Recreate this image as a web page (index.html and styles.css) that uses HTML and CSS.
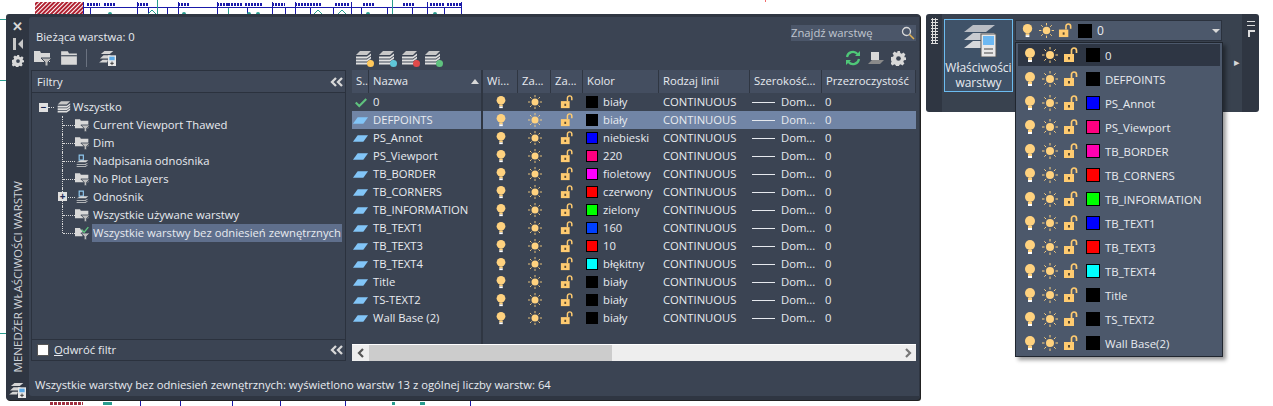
FILE: index.html
```html
<!DOCTYPE html>
<html lang="pl">
<head>
<meta charset="utf-8">
<title>Menedżer właściwości warstw</title>
<link rel="stylesheet" href="styles.css">
</head>
<body>
<svg class="defs" width="0" height="0" aria-hidden="true">
  <defs>
    <pattern id="hatch" width="3" height="3" patternUnits="userSpaceOnUse" patternTransform="rotate(45)"><rect width="3" height="3" fill="#fff"/><rect width="2" height="3" fill="#b02030"/></pattern>
    <symbol id="bulb" viewBox="0 0 16 16"><circle cx="8" cy="6" r="5" fill="#ffd27f"/><rect x="6" y="11" width="4" height="2" fill="#ffd27f"/><rect x="6" y="13" width="4" height="2" fill="#fff"/></symbol>
    <symbol id="sun" viewBox="0 0 16 16"><circle cx="8" cy="8" r="4" fill="#ffd27f"/><path d="M8 0v2.500M8 13.500v2.500M0 8h2.500M13.500 8h2.500M2.300 2.300l1.800 1.800M11.900 11.900l1.800 1.800M2.300 13.700l1.800-1.800M11.900 4.100l1.800-1.800" stroke="#ffd27f" stroke-width="1" fill="none"/></symbol>
    <symbol id="lock" viewBox="0 0 16 16"><rect x="1" y="7" width="10" height="8" fill="#ffcb70"/><rect x="5" y="10" width="2" height="2.500" fill="#5a4a30"/><path d="M8.500 7V3.500a2.500 2.500 0 0 1 5 0V6" fill="none" stroke="#ffcb70" stroke-width="1.700"/></symbol>
    <symbol id="layer" viewBox="0 0 18 10"><polygon points="1,9 6,2 17,2 12,9" fill="#82c5f7"/></symbol>
    <symbol id="check" viewBox="0 0 16 12"><path d="M2 6l4 4 8-8" fill="none" stroke="#5fc27e" stroke-width="2.400"/></symbol>
    <symbol id="stack" viewBox="0 0 18 16"><path d="M6 1h11l-4 4H2z" fill="#c8c8c8"/><path d="M2 6.500h11l4-3v2l-4 3H2zM2 9.500h11l4-3v2l-4 3H2zM2 12.500h11l4-3v2l-4 3H2z" fill="#e0e0e0"/></symbol>
    <symbol id="filterfolder" viewBox="0 0 18 16"><path d="M0 1h6l1 2h9v9H0z" fill="#d8d8d8"/><path d="M7 8h11l-4 4v4h-3v-4z" fill="#bdbdbd" stroke="#3b4453" stroke-width="1"/></symbol>
    <symbol id="folder" viewBox="0 0 16 14"><path d="M1 1h6l1 2h7v10H1z" fill="#d8d8d8"/><path d="M1 5h14" stroke="#3b4453"/></symbol>
    <symbol id="xref" viewBox="0 0 18 16"><path d="M5 1h5v6H5z" fill="none" stroke="#8fc8ef" stroke-width="1.400"/><path d="M7 7h9l-3 2.500H2zM16 10l-3 2.500H2v-1h10zM16 12.500l-3 2.500H2v-1h10z" fill="#d8d8d8"/></symbol>
    <symbol id="filtercheck" viewBox="0 0 18 16"><path d="M0 2h6l1 2h2v8H0z" fill="#d8d8d8"/><path d="M7 8h11l-4 4v4h-3v-4z" fill="#bdbdbd" stroke="#3b4453"/><path d="M8 4l3 3 5-6" fill="none" stroke="#5fc27e" stroke-width="1.700"/></symbol>
    <symbol id="gear" viewBox="0 0 16 16"><path d="M6.500 0h3l.4 2.200 1.500.7 1.900-1.200 2.100 2.100-1.200 1.900.7 1.500L16 6.500v3l-2.200.4-.7 1.500 1.200 1.900-2.100 2.100-1.900-1.200-1.500.7-.4 2.100h-3l-.4-2.100-1.500-.7-1.900 1.200-2.100-2.100 1.200-1.900-.7-1.500L0 9.500v-3l2.200-.4.700-1.500-1.200-1.900 2.100-2.100 1.900 1.200 1.500-.7z" fill="#d8d8d8"/><circle cx="8" cy="8" r="2.500" fill="#3b4453"/></symbol>
    <symbol id="manager" viewBox="0 0 20 18"><path d="M6 1h10l-4 3.500H2zM5 6h8l-2 3.500H1zM4 11h6l-1 3H0z" fill="#d4d4d4"/><rect x="10" y="6" width="9" height="12" fill="#e8e8e8"/><rect x="11.500" y="7.500" width="6" height="4" fill="#5aa9e6"/><path d="M12.500 15h4M14.500 13v4" stroke="#333" stroke-width="1"/></symbol>
    <symbol id="dchev" viewBox="0 0 13 10"><path d="M6 1L2 5l4 4M12 1L8 5l4 4" fill="none" stroke="#d8d8d8" stroke-width="2.300"/></symbol>
  </defs>
</svg>

<div class="stage">
  <svg class="cad" width="1273" height="406" aria-hidden="true">
    <rect x="35" y="2" width="49" height="12" fill="url(#hatch)"/>
    <g stroke="#1a1aa8" fill="none" shape-rendering="crispEdges">
      <path d="M84 7.500H462M83.500 2V14M90.500 7V14M137.500 2V14M148.500 7V14M167.500 7V14M178.500 2V14M217.500 2V14M247.500 7V14M272.500 2V14M285.500 7V14M295.500 2V14M310.500 7V14M333.500 7V14M351.500 2V14M361.500 7V14M387.500 7V14M412.500 7V14M427.500 2V14M444.500 7V14M461.500 2V14"/>
      <path d="M87 4.500h13M104 4.500h11M137 4.500h11M178 4.500h12M217 4.500h11M228 4.500h14M245 4.500h17M272 4.500h13M295 4.500h15M310 4.500h12M335 4.500h15M363 4.500h12M403 4.500h12M430 4.500h14M447 4.500h15" stroke-width="3" stroke-dasharray="2 1"/>
      <path d="M140.500 401v5M180.500 401v5M232.500 401v5M280.500 401v5M345.500 401v5M470.500 401v5"/>
      <path d="M50 403h33" stroke="#a03040" stroke-width="3" stroke-dasharray="3 1"/>
      <path d="M103 403h9M392 403h3M420 403h5" stroke="#2a9d8f" stroke-width="3"/>
    </g>
    <g stroke="#2a9d8f" fill="none" shape-rendering="crispEdges">
      <path d="M0 19.500h6M0 80.500h6M0 333.500h6M157.500 0v14M228.500 8v6M392.500 0v14"/>
      <path d="M152 10l-4 4h8zM318 10l-4 4h8zM342 10l-4 4h8z"/>
    </g>
    <g fill="#2a9d8f"><circle cx="110" cy="14" r="2"/><circle cx="184" cy="14" r="2"/><circle cx="249" cy="14" r="2"/><circle cx="258" cy="14" r="2"/><circle cx="368" cy="14" r="2"/><circle cx="435" cy="14" r="2"/></g>
    <path d="M765.500 0v2" stroke="#f26a6a"/>
  </svg>

  <section class="palette">
    <aside class="rail">
      <div class="rail-top">
        <span class="rail-btn close">✕</span>
        <svg class="rail-pin" viewBox="0 0 10 12"><path d="M0 0h3v12H0zM10 1v10L5 6z" fill="#c8c8c8"/></svg>
        <svg class="rail-gear"><use href="#gear"/></svg>
      </div>
      <div class="rail-bottom">
        <span class="rail-title">MENEDŻER WŁAŚCIWOŚCI WARSTW</span>
        <svg class="rail-icon"><use href="#manager"/></svg>
      </div>
    </aside>

    <div class="main">
      <div class="cols">
        <div class="left">
          <div class="current">Bieżąca warstwa: 0</div>
          <div class="tools">
            <svg class="tool"><use href="#filterfolder"/></svg>
            <svg class="tool"><use href="#folder"/></svg>
            <span class="sep"></span>
            <svg class="tool"><use href="#manager"/></svg>
          </div>
          <div class="filters">
            <div class="filters-head"><span>Filtry</span><svg class="chev"><use href="#dchev"/></svg></div>
            <div class="tree">
              <div class="tree-root"><span class="box">−</span><span class="twig"></span><svg class="tree-ico"><use href="#stack"/></svg><span>Wszystko</span></div>
              <ul class="branch">
                <li><span class="twig"></span><svg class="tree-ico"><use href="#filterfolder"/></svg><span>Current Viewport Thawed</span></li>
                <li><span class="twig"></span><svg class="tree-ico"><use href="#filterfolder"/></svg><span>Dim</span></li>
                <li><span class="twig"></span><svg class="tree-ico"><use href="#xref"/></svg><span>Nadpisania odnośnika</span></li>
                <li><span class="twig"></span><svg class="tree-ico"><use href="#filterfolder"/></svg><span>No Plot Layers</span></li>
                <li><span class="box box-abs">+</span><span class="twig"></span><svg class="tree-ico"><use href="#xref"/></svg><span>Odnośnik</span></li>
                <li><span class="twig"></span><svg class="tree-ico"><use href="#filterfolder"/></svg><span>Wszystkie używane warstwy</span></li>
                <li class="last"><span class="twig"></span><svg class="tree-ico"><use href="#filtercheck"/></svg><span class="tree-sel">Wszystkie warstwy bez odniesień zewnętrznych</span></li>
              </ul>
            </div>
            <div class="filters-foot"><span class="checkbox"></span><span><u>O</u>dwróć filtr</span><svg class="chev"><use href="#dchev"/></svg></div>
          </div>
        </div>

        <div class="right">
          <div class="search-row"><div class="search"><span>Znajdź warstwę</span><svg class="search-ico" viewBox="0 0 14 14"><circle cx="5.500" cy="5.500" r="4" fill="none" stroke="#d8d8d8" stroke-width="1.300"/><path d="M8.500 8.500l4.500 4.500" stroke="#e0b050" stroke-width="1.500"/></svg></div></div>
          <div class="layer-tools">
            <div class="tool-group">
              <span class="stack-tool"><svg class="tool"><use href="#stack"/></svg><i class="dot d-y"></i></span>
              <span class="stack-tool"><svg class="tool"><use href="#stack"/></svg><i class="dot d-c"></i></span>
              <span class="stack-tool"><svg class="tool"><use href="#stack"/></svg><i class="dot d-r"></i></span>
              <span class="stack-tool"><svg class="tool"><use href="#stack"/></svg><i class="dot d-g"></i></span>
            </div>
            <div class="tool-group tool-right">
              <svg class="refresh" viewBox="0 0 16 16"><path d="M2 7a6 6 0 0 1 10.500-3M14 9a6 6 0 0 1-10.500 3" fill="none" stroke="#4fc878" stroke-width="2.200"/><path d="M15 1v5h-5zM1 15v-5h5z" fill="#4fc878"/></svg>
              <svg class="settings-layer" viewBox="0 0 16 14"><rect x="3" y="1" width="8" height="8" fill="#d8d8d8"/><path d="M4 9h12l-4 4H0z" fill="#8a8a8a"/></svg>
              <svg class="gear"><use href="#gear"/></svg>
            </div>
          </div>

          <div class="table">
            <div class="thead">
              <span>S..</span><span class="sort">Nazwa<i class="arrow"></i></span><span>Wi...</span><span>Za...</span><span>Za...</span><span>Kolor</span><span>Rodzaj linii</span><span>Szerokość...</span><span>Przezroczystość</span>
            </div>
            <div class="rows">
              <div class="row"><span class="cs"><svg class="mark-check"><use href="#check"/></svg></span><span class="name">0</span><span class="st"><svg class="ico"><use href="#bulb"/></svg></span><span class="st"><svg class="ico"><use href="#sun"/></svg></span><span class="st"><svg class="ico"><use href="#lock"/></svg></span><span class="col"><i class="sw black"></i>biały</span><span class="lt">CONTINUOUS</span><span class="lw"><i class="ln"></i>Dom...</span><span class="tr">0</span></div>
              <div class="row sel"><span class="cs"><svg class="mark"><use href="#layer"/></svg></span><span class="name">DEFPOINTS</span><span class="st"><svg class="ico"><use href="#bulb"/></svg></span><span class="st"><svg class="ico"><use href="#sun"/></svg></span><span class="st"><svg class="ico"><use href="#lock"/></svg></span><span class="col"><i class="sw black"></i>biały</span><span class="lt">CONTINUOUS</span><span class="lw"><i class="ln"></i>Dom...</span><span class="tr">0</span></div>
              <div class="row"><span class="cs"><svg class="mark"><use href="#layer"/></svg></span><span class="name">PS_Annot</span><span class="st"><svg class="ico"><use href="#bulb"/></svg></span><span class="st"><svg class="ico"><use href="#sun"/></svg></span><span class="st"><svg class="ico"><use href="#lock"/></svg></span><span class="col"><i class="sw blue"></i>niebieski</span><span class="lt">CONTINUOUS</span><span class="lw"><i class="ln"></i>Dom...</span><span class="tr">0</span></div>
              <div class="row"><span class="cs"><svg class="mark"><use href="#layer"/></svg></span><span class="name">PS_Viewport</span><span class="st"><svg class="ico"><use href="#bulb"/></svg></span><span class="st"><svg class="ico"><use href="#sun"/></svg></span><span class="st"><svg class="ico"><use href="#lock"/></svg></span><span class="col"><i class="sw pink"></i>220</span><span class="lt">CONTINUOUS</span><span class="lw"><i class="ln"></i>Dom...</span><span class="tr">0</span></div>
              <div class="row"><span class="cs"><svg class="mark"><use href="#layer"/></svg></span><span class="name">TB_BORDER</span><span class="st"><svg class="ico"><use href="#bulb"/></svg></span><span class="st"><svg class="ico"><use href="#sun"/></svg></span><span class="st"><svg class="ico"><use href="#lock"/></svg></span><span class="col"><i class="sw magenta"></i>fioletowy</span><span class="lt">CONTINUOUS</span><span class="lw"><i class="ln"></i>Dom...</span><span class="tr">0</span></div>
              <div class="row"><span class="cs"><svg class="mark"><use href="#layer"/></svg></span><span class="name">TB_CORNERS</span><span class="st"><svg class="ico"><use href="#bulb"/></svg></span><span class="st"><svg class="ico"><use href="#sun"/></svg></span><span class="st"><svg class="ico"><use href="#lock"/></svg></span><span class="col"><i class="sw red"></i>czerwony</span><span class="lt">CONTINUOUS</span><span class="lw"><i class="ln"></i>Dom...</span><span class="tr">0</span></div>
              <div class="row"><span class="cs"><svg class="mark"><use href="#layer"/></svg></span><span class="name">TB_INFORMATION</span><span class="st"><svg class="ico"><use href="#bulb"/></svg></span><span class="st"><svg class="ico"><use href="#sun"/></svg></span><span class="st"><svg class="ico"><use href="#lock"/></svg></span><span class="col"><i class="sw green"></i>zielony</span><span class="lt">CONTINUOUS</span><span class="lw"><i class="ln"></i>Dom...</span><span class="tr">0</span></div>
              <div class="row"><span class="cs"><svg class="mark"><use href="#layer"/></svg></span><span class="name">TB_TEXT1</span><span class="st"><svg class="ico"><use href="#bulb"/></svg></span><span class="st"><svg class="ico"><use href="#sun"/></svg></span><span class="st"><svg class="ico"><use href="#lock"/></svg></span><span class="col"><i class="sw c160"></i>160</span><span class="lt">CONTINUOUS</span><span class="lw"><i class="ln"></i>Dom...</span><span class="tr">0</span></div>
              <div class="row"><span class="cs"><svg class="mark"><use href="#layer"/></svg></span><span class="name">TB_TEXT3</span><span class="st"><svg class="ico"><use href="#bulb"/></svg></span><span class="st"><svg class="ico"><use href="#sun"/></svg></span><span class="st"><svg class="ico"><use href="#lock"/></svg></span><span class="col"><i class="sw red"></i>10</span><span class="lt">CONTINUOUS</span><span class="lw"><i class="ln"></i>Dom...</span><span class="tr">0</span></div>
              <div class="row"><span class="cs"><svg class="mark"><use href="#layer"/></svg></span><span class="name">TB_TEXT4</span><span class="st"><svg class="ico"><use href="#bulb"/></svg></span><span class="st"><svg class="ico"><use href="#sun"/></svg></span><span class="st"><svg class="ico"><use href="#lock"/></svg></span><span class="col"><i class="sw cyan"></i>błękitny</span><span class="lt">CONTINUOUS</span><span class="lw"><i class="ln"></i>Dom...</span><span class="tr">0</span></div>
              <div class="row"><span class="cs"><svg class="mark"><use href="#layer"/></svg></span><span class="name">Title</span><span class="st"><svg class="ico"><use href="#bulb"/></svg></span><span class="st"><svg class="ico"><use href="#sun"/></svg></span><span class="st"><svg class="ico"><use href="#lock"/></svg></span><span class="col"><i class="sw black"></i>biały</span><span class="lt">CONTINUOUS</span><span class="lw"><i class="ln"></i>Dom...</span><span class="tr">0</span></div>
              <div class="row"><span class="cs"><svg class="mark"><use href="#layer"/></svg></span><span class="name">TS-TEXT2</span><span class="st"><svg class="ico"><use href="#bulb"/></svg></span><span class="st"><svg class="ico"><use href="#sun"/></svg></span><span class="st"><svg class="ico"><use href="#lock"/></svg></span><span class="col"><i class="sw black"></i>biały</span><span class="lt">CONTINUOUS</span><span class="lw"><i class="ln"></i>Dom...</span><span class="tr">0</span></div>
              <div class="row"><span class="cs"><svg class="mark"><use href="#layer"/></svg></span><span class="name">Wall Base (2)</span><span class="st"><svg class="ico"><use href="#bulb"/></svg></span><span class="st"><svg class="ico"><use href="#sun"/></svg></span><span class="st"><svg class="ico"><use href="#lock"/></svg></span><span class="col"><i class="sw black"></i>biały</span><span class="lt">CONTINUOUS</span><span class="lw"><i class="ln"></i>Dom...</span><span class="tr">0</span></div>
            </div>
            <div class="scrollbar">
              <span class="sb-btn"><svg class="sb-chev" viewBox="0 0 8 10"><path d="M6 1L2 5l4 4" fill="none" stroke="#555" stroke-width="2.200"/></svg></span>
              <span class="sb-thumb"></span><span class="sb-rest"></span>
              <span class="sb-btn"><svg class="sb-chev" viewBox="0 0 8 10"><path d="M2 1l4 4-4 4" fill="none" stroke="#777" stroke-width="2.200"/></svg></span>
            </div>
          </div>
        </div>
      </div>
      <div class="status">Wszystkie warstwy bez odniesień zewnętrznych: wyświetlono warstw 13 z ogólnej liczby warstw: 64</div>
    </div>
  </section>

  <section class="ribbon">
    <div class="grip"><span class="grip-dots"></span></div>
    <div class="ribbon-body">
      <button class="big-btn" type="button">
        <svg class="big-ico" viewBox="0 0 36 34"><path d="M12 2h22l-9 7H3z" fill="#b9bdc4"/><path d="M12 10h22l-9 7H3z" fill="#c8cbd0"/><path d="M12 18h22l-9 7H3z" fill="#d6d8dc"/><rect x="20" y="11" width="15" height="23" fill="#e8e8e8" stroke="#555"/><rect x="22" y="13" width="11" height="9" fill="#6cb8f2"/><path d="M23 26h9M23 30h9" stroke="#444"/></svg>
        <span>Właściwości<br>warstwy</span>
      </button>
      <div class="combo">
        <svg class="ico"><use href="#bulb"/></svg><svg class="ico"><use href="#sun"/></svg><svg class="ico"><use href="#lock"/></svg><i class="sw-lg black"></i><span class="combo-text">0</span><i class="combo-arrow"></i>
      </div>
      <span class="more">▸</span>
    </div>
    <div class="side-rail"><span class="side-a"></span><span class="side-b"></span></div>
  </section>

  <div class="dropdown">
    <div class="dd-row cur"><svg class="ico"><use href="#bulb"/></svg><svg class="ico"><use href="#sun"/></svg><svg class="ico"><use href="#lock"/></svg><i class="sw-lg black"></i><span>0</span></div>
    <div class="dd-row"><svg class="ico"><use href="#bulb"/></svg><svg class="ico"><use href="#sun"/></svg><svg class="ico"><use href="#lock"/></svg><i class="sw-lg black"></i><span>DEFPOINTS</span></div>
    <div class="dd-row"><svg class="ico"><use href="#bulb"/></svg><svg class="ico"><use href="#sun"/></svg><svg class="ico"><use href="#lock"/></svg><i class="sw-lg blue"></i><span>PS_Annot</span></div>
    <div class="dd-row"><svg class="ico"><use href="#bulb"/></svg><svg class="ico"><use href="#sun"/></svg><svg class="ico"><use href="#lock"/></svg><i class="sw-lg pink"></i><span>PS_Viewport</span></div>
    <div class="dd-row"><svg class="ico"><use href="#bulb"/></svg><svg class="ico"><use href="#sun"/></svg><svg class="ico"><use href="#lock"/></svg><i class="sw-lg rose"></i><span>TB_BORDER</span></div>
    <div class="dd-row"><svg class="ico"><use href="#bulb"/></svg><svg class="ico"><use href="#sun"/></svg><svg class="ico"><use href="#lock"/></svg><i class="sw-lg red"></i><span>TB_CORNERS</span></div>
    <div class="dd-row"><svg class="ico"><use href="#bulb"/></svg><svg class="ico"><use href="#sun"/></svg><svg class="ico"><use href="#lock"/></svg><i class="sw-lg green"></i><span>TB_INFORMATION</span></div>
    <div class="dd-row"><svg class="ico"><use href="#bulb"/></svg><svg class="ico"><use href="#sun"/></svg><svg class="ico"><use href="#lock"/></svg><i class="sw-lg blue"></i><span>TB_TEXT1</span></div>
    <div class="dd-row"><svg class="ico"><use href="#bulb"/></svg><svg class="ico"><use href="#sun"/></svg><svg class="ico"><use href="#lock"/></svg><i class="sw-lg red"></i><span>TB_TEXT3</span></div>
    <div class="dd-row"><svg class="ico"><use href="#bulb"/></svg><svg class="ico"><use href="#sun"/></svg><svg class="ico"><use href="#lock"/></svg><i class="sw-lg cyan"></i><span>TB_TEXT4</span></div>
    <div class="dd-row"><svg class="ico"><use href="#bulb"/></svg><svg class="ico"><use href="#sun"/></svg><svg class="ico"><use href="#lock"/></svg><i class="sw-lg black"></i><span>Title</span></div>
    <div class="dd-row"><svg class="ico"><use href="#bulb"/></svg><svg class="ico"><use href="#sun"/></svg><svg class="ico"><use href="#lock"/></svg><i class="sw-lg black"></i><span>TS_TEXT2</span></div>
    <div class="dd-row"><svg class="ico"><use href="#bulb"/></svg><svg class="ico"><use href="#sun"/></svg><svg class="ico"><use href="#lock"/></svg><i class="sw-lg black"></i><span>Wall Base(2)</span></div>
  </div>
</div>
</body>
</html>
```
FILE: styles.css
```css
* { box-sizing: border-box; }
html, body { margin: 0; padding: 0; background: #fff; overflow: hidden; }
body { font: 11.25px/16px "Open Sans", "Noto Sans", "Liberation Sans", sans-serif; color: #e8ebf0; }
.defs { position: absolute; }
.stage { position: relative; width: 1273px; height: 406px; overflow: hidden; }
.cad { position: absolute; left: 0; top: 0; }

/* palette window */
.palette { position: absolute; left: 6px; top: 14px; width: 914px; height: 386px; display: flex; background: #2f3642; border-radius: 3px; box-shadow: 1px 1px 0 #222; }
.rail { width: 23px; display: flex; flex-direction: column; justify-content: space-between; align-items: center; color: #d8d8d8; }
.rail-top { display: flex; flex-direction: column; align-items: center; padding-top: 4px; }
.rail-btn { height: 18px; line-height: 16px; }
.close { font-size: 13px; font-weight: 700; }
.rail-pin { width: 10px; height: 12px; margin-top: 2px; }
.rail-gear { width: 12px; height: 12px; margin-top: 5px; }
.rail-bottom { display: flex; flex-direction: column; align-items: center; gap: 10px; padding-bottom: 2px; }
.rail-title { writing-mode: vertical-rl; transform: rotate(180deg); font-size: 11.500px; line-height: 14px; color: #cfd3d9; white-space: nowrap; }
.rail-icon { width: 18px; height: 16px; }

.main { flex: 1; margin: 3px 1px 4px 0; background: #3b4453; border-radius: 3px 0 0 3px; display: flex; flex-direction: column; min-width: 0; }
.cols { display: flex; gap: 6px; padding: 8px 3px 0 2px; height: 344px; }
.left { width: 315px; display: flex; flex-direction: column; }
.right { width: 564px; display: flex; flex-direction: column; }

.current { height: 21px; padding-left: 5px; line-height: 24px; }
.tools, .layer-tools { height: 24px; display: flex; align-items: flex-start; gap: 8px; padding: 4px 0 0 3px; }
.tool { width: 18px; height: 16px; display: block; }
.sep { width: 1px; height: 18px; background: #6a7280; margin: -1px 4px 0 0; }
.filters { height: 291px; border: 1px solid #2b323e; display: flex; flex-direction: column; }
.filters-head { height: 22px; flex: none; display: flex; justify-content: space-between; align-items: center; padding: 0 2px 0 5px; border-bottom: 1px solid #2b323e; background: #3f4858; }
.chev { width: 13px; height: 10px; flex: none; }
.tree { flex: 1; padding: 5px 0 0 7px; }
.tree-root { height: 18px; display: flex; align-items: center; }
.box { width: 9px; height: 9px; background: #e0e0e0; color: #1d2a55; font-size: 10px; line-height: 8px; font-weight: 700; text-align: center; flex: none; }
.box-abs { position: absolute; left: -5px; top: 4px; }
.twig { width: 6px; border-bottom: 1px dotted #d8d8d8; flex: none; margin-right: 2px; }
.tree-ico { width: 15px; height: 14px; flex: none; margin-right: 3px; }
.tree-root .tree-ico { margin-right: 2px; }
.branch { list-style: none; margin: 0 0 0 23px; padding: 0; }
.branch li { position: relative; height: 18px; display: flex; align-items: center; border-left: 1px dotted #d8d8d8; }
.branch li .twig { width: 12px; margin-right: 0; }
.branch li.last { border-left: 1px solid transparent; }
.branch li.last::before { content: ""; position: absolute; left: -1px; top: 0; height: 9px; border-left: 1px dotted #d8d8d8; }
.branch li.last .tree-ico { margin-right: 2px; }
.tree-sel { background: #5f6f8c; padding: 0 1px; line-height: 18px; white-space: nowrap; }
.filters-foot { height: 21px; flex: none; display: flex; align-items: center; gap: 5px; padding: 0 2px 0 5px; border-top: 1px solid #2b323e; }
.filters-foot .chev { margin-left: auto; }
.checkbox { width: 12px; height: 12px; background: #fff; border: 1px solid #555; }

/* layer table */
.search-row { height: 21px; display: flex; justify-content: flex-end; }
.search { width: 125px; height: 16px; background: #4b5669; color: #c0c6d0; display: flex; justify-content: space-between; align-items: center; }
.search-ico { width: 14px; height: 14px; margin-right: 1px; }
.layer-tools { justify-content: space-between; padding-left: 2px; }
.tool-group { display: flex; align-items: center; gap: 5px; }
.tool-right { gap: 7px; padding-right: 10px; }
.stack-tool { position: relative; width: 18px; height: 16px; }
.dot { position: absolute; right: -2px; bottom: -1px; width: 7px; height: 7px; border-radius: 50%; }
.d-y { background: #ffc85a; } .d-c { background: #5fc7d8; } .d-r { background: #e04a4a; } .d-g { background: #5fc27e; }
.refresh { width: 16px; height: 16px; }
.settings-layer { width: 16px; height: 14px; }
.gear { width: 15px; height: 15px; }

.table { height: 291px; display: flex; flex-direction: column; }
.thead, .row { display: grid; grid-template-columns: 17px 114px 35px 33px 32px 76px 91px 72px 94px; }
.thead { height: 23px; flex: none; gap: 0; background: #2f3642; }
.thead span { background: #444e60; margin-right: 1px; padding-left: 4px; line-height: 22px; white-space: nowrap; overflow: hidden; }
.sort { position: relative; }
.thead span.sort { margin-right: 2px; }
.arrow { position: absolute; right: 2px; top: 9px; border: 4px solid transparent; border-top: 0; border-bottom: 5px solid #d8d8d8; }
.rows { flex: 1; background: linear-gradient(to right, transparent 129px, #2f3642 129px, #2f3642 131px, transparent 131px); }
.row { height: 18px; line-height: 18px; white-space: nowrap; }
.row.sel { background: #7185a6; }
.cs { display: flex; align-items: center; justify-content: center; }
.name { padding-left: 4px; border-right: 2px solid #2f3642; }
.st { display: flex; justify-content: center; align-items: center; }
.col { display: flex; align-items: center; padding-left: 3px; gap: 5px; }
.lt { padding-left: 4px; }
.lw { display: flex; align-items: center; padding-left: 2px; gap: 6px; }
.tr { padding-left: 3px; }
.ico { width: 14px; height: 14px; flex: none; display: block; }
.mark { width: 18px; height: 10px; }
.mark-check { width: 14px; height: 11px; }
.sw { width: 12px; height: 12px; flex: none; border: 1px solid #000; display: block; }
.sw-lg { width: 14px; height: 14px; flex: none; display: block; border: 1px solid #000; }
.black { background: #000; } .blue { background: #00f; } .pink { background: #ff0080; } .rose { background: #ff00b0; } .magenta { background: #f0f; } .red { background: #f00; } .green { background: #0f0; } .c160 { background: #0040ff; } .cyan { background: #0ff; }
.ln { width: 23px; height: 1px; background: #e6e9ee; display: block; }
.scrollbar { height: 17px; flex: none; display: flex; align-items: stretch; background: #eee; border-top: 1px solid #fff; }
.sb-btn { width: 17px; display: flex; align-items: center; justify-content: center; }
.sb-chev { width: 8px; height: 10px; }
.sb-thumb { width: 243px; background: #ccc; }
.sb-rest { flex: 1; }
.status { padding: 16px 0 0 6px; white-space: nowrap; }

/* ribbon */
.ribbon { position: absolute; left: 926px; top: 14px; width: 333px; height: 98px; display: flex; background: #2f3642; border-radius: 3px; }
.grip { width: 16px; flex: none; padding: 4px 0 0 5px; }
.grip-dots { display: block; width: 7px; height: 26px; background: radial-gradient(circle, #ddd 1px, transparent 1.200px) 0 0 / 3px 3px; }
.ribbon-body { flex: 1; background: #39424f; margin-right: 1px; padding: 5px 2px 0; display: flex; gap: 2px; align-items: flex-start; position: relative; }
.big-btn { width: 69px; height: 73px; flex: none; background: #3f5268; border: 1px solid #6cbcf0; color: #e8ebf0; font: 12px/15px "Open Sans", "Noto Sans", sans-serif; padding: 3px 0 0; display: flex; flex-direction: column; align-items: center; gap: 3px; }
.big-ico { width: 36px; height: 34px; flex: none; }
.combo { width: 207px; height: 21px; margin-top: 1px; flex: none; background: #4c586b; border: 1px solid #2b323e; display: flex; align-items: center; gap: 4px; padding-left: 4px; font-size: 12px; }
.combo .ico { width: 15px; height: 15px; }
.combo .sw-lg { margin-left: 1px; }
.combo-text { margin-left: 1px; }
.combo-arrow { margin-left: auto; margin-right: 1px; border: 4px solid transparent; border-top: 4px solid #d8d8d8; border-bottom: 0; }
.more { position: absolute; left: 292px; top: 40px; color: #d8d8d8; }
.side-rail { width: 16px; display: flex; flex-direction: column; align-items: center; gap: 5px; padding-top: 7px; }
.side-a { width: 8px; height: 1px; background: #ddd; box-shadow: 0 4px 0 #ddd; }
.side-b { width: 7px; height: 7px; border: 2px solid #ddd; border-right: 0; border-bottom: 0; margin-top: 3px; }

/* dropdown menu */
.dropdown { position: absolute; left: 1015px; top: 42px; width: 208px; height: 315px; padding: 1px 2px 0; background: #4c586b; border: 1px solid #20262f; box-shadow: 3px 3px 4px rgba(0, 0, 0, .4); display: flex; flex-direction: column; }
.dd-row { height: 24px; flex: none; display: flex; align-items: center; gap: 4px; padding-left: 4px; white-space: nowrap; font-size: 11.400px; }
.dd-row .ico { width: 16px; height: 16px; margin-top: -2px; }
.dd-row .ico:nth-of-type(3) { margin-left: 1px; }
.dd-row .sw-lg { margin: -2px 3px 0; }
.dd-row span { margin-left: -2px; }
.dd-row.cur { background: linear-gradient(#2e3644 22px, transparent 22px); }
```
